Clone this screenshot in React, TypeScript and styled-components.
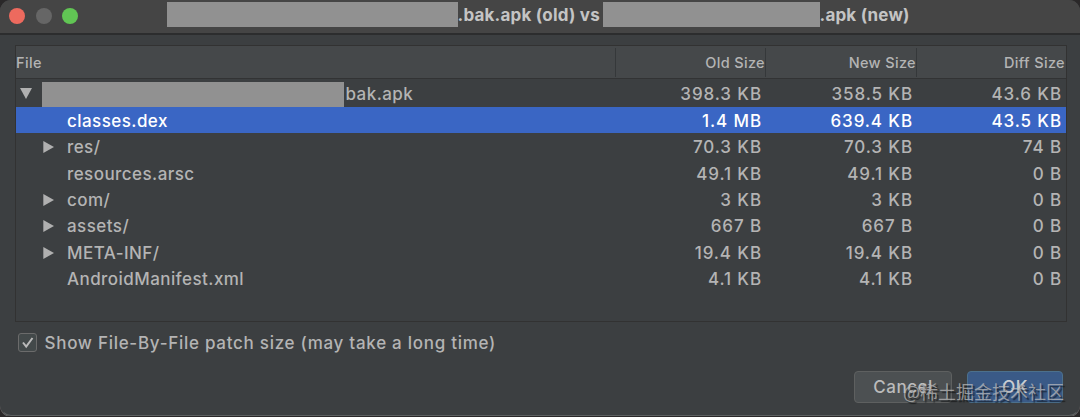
import React from "react";
import styled, { createGlobalStyle } from "styled-components";

const GlobalStyle = createGlobalStyle`
  body {
    margin: 0;
    background: #2a2829;
  }
  * {
    box-sizing: border-box;
  }
`;

const Dialog = styled.div`
  position: relative;
  display: flex;
  flex-direction: column;
  width: 1080px;
  height: 416px;
  overflow: hidden;
  border-radius: 11px;
  background: #3c3f41;
  box-shadow: 0 1px 0 #6b6869;
  color: #b4b4b4;
  font-family: Inter, "Liberation Sans", sans-serif;
  font-size: 17px;
  font-weight: 500;
  letter-spacing: 0.72px;
  white-space: nowrap;

  &::after {
    content: "";
    position: absolute;
    inset: 0;
    border: 1px solid transparent;
    border-bottom-color: #5d6061;
    border-radius: 11px;
    pointer-events: none;
  }
`;

const TitleBar = styled.header`
  display: flex;
  align-items: center;
  height: 35px;
  flex: none;
  padding: 0 0 2px 9px;
  background: #454545;
  border-bottom: 2px solid #2c2d2e;
`;

const Light = styled.span<{ color: string }>`
  width: 16px;
  height: 16px;
  margin-right: 10.5px;
  border-radius: 50%;
  background: ${p => p.color};
`;

const Title = styled.h1`
  display: flex;
  align-items: center;
  margin: 0 0 2px 78px;
  color: #c4c4c4;
  font-size: 17px;
  font-weight: 650;
  letter-spacing: 0.2px;
`;

const Redacted = styled.span<{ width: number }>`
  width: ${p => p.width}px;
  height: 25px;
  flex: none;
  background: #919191;
`;

const TitleText = styled.span<{ width?: number }>`
  width: ${p => (p.width ? `${p.width}px` : "auto")};
  margin-top: 1px;
`;

const Table = styled.section`
  flex: none;
  width: 1052px;
  height: 277px;
  margin: 10px 0 0 15px;
  border: 1px solid #323232;
`;

const Grid = styled.div`
  display: grid;
  grid-template-columns: 600px 150px 151px 149px;
  align-items: center;
`;

const HeadRow = styled(Grid)`
  height: 33px;
  border-bottom: 1px solid #323334;
  background: #45484a;
  font-size: 14.5px;
  letter-spacing: 0.35px;
`;

const HeadCell = styled.div<{ right?: boolean }>`
  height: 29px;
  line-height: 29px;
  text-align: ${p => (p.right ? "right" : "left")};

  &:not(:last-child) {
    border-right: 1px solid #35383a;
  }
  &:last-child {
    padding-right: 1px;
  }
`;

const Body = styled.div`
  padding-top: 1.6px;
`;

const Row = styled(Grid)<{ selected?: boolean }>`
  height: 26.4px;
  padding-top: 1.4px;
  background: ${p => (p.selected ? "#3a66c4" : "transparent")};
  color: ${p => (p.selected ? "#fff" : "inherit")};
`;

const FileCell = styled.div<{ root?: boolean }>`
  display: flex;
  align-items: center;
  height: 25px;
  padding-left: ${p => (p.root ? 4 : 27)}px;
  letter-spacing: 0.44px;
`;

const Arrow = styled.span<{ root?: boolean }>`
  display: flex;
  width: ${p => (p.root ? 22 : 24)}px;
`;

const FileName = styled.span<{ root?: boolean }>`
  margin-left: ${p => (p.root ? 1.5 : 0)}px;
`;

const Size = styled.div`
  padding-right: 4px;
  letter-spacing: 0.9px;
  text-align: right;
`;

const CheckRow = styled.label`
  display: flex;
  align-items: center;
  height: 21px;
  margin: 10px 0 0 18px;
`;

const Box = styled.span`
  display: flex;
  width: 19px;
  height: 19px;
  margin: 0 7.5px 1px 0;
  border: 1px solid #6b6b6b;
  border-radius: 3px;
  background: #43494a;
`;

const Actions = styled.footer`
  display: flex;
  gap: 15px;
  margin: 18px 0 0 854px;
`;

const Button = styled.button<{ primary?: boolean }>`
  width: ${p => (p.primary ? 96 : 98)}px;
  height: 32px;
  padding: 0;
  border: 1px solid ${p => (p.primary ? "#4c708c" : "#5e6060")};
  border-radius: 4px;
  background: ${p => (p.primary ? "#3a5a87" : "#4c5052")};
  color: ${p => (p.primary ? "#c9cdd2" : "#bbb")};
  font: inherit;
  letter-spacing: 0.5px;
`;

const Watermark = styled.div`
  position: absolute;
  top: 379px;
  left: 903px;
  color: rgba(190, 190, 190, 0.72);
  font: 18px/24px "Noto Sans CJK SC", sans-serif;
  letter-spacing: 0;
  text-shadow: 2px 2px 1px rgba(0, 0, 0, 0.5);
`;

const files = [
  { name: "bak.apk", oldSize: "398.3 KB", newSize: "358.5 KB", diff: "43.6 KB", root: true, folder: true },
  { name: "classes.dex", oldSize: "1.4 MB", newSize: "639.4 KB", diff: "43.5 KB", selected: true },
  { name: "res/", oldSize: "70.3 KB", newSize: "70.3 KB", diff: "74 B", folder: true },
  { name: "resources.arsc", oldSize: "49.1 KB", newSize: "49.1 KB", diff: "0 B" },
  { name: "com/", oldSize: "3 KB", newSize: "3 KB", diff: "0 B", folder: true },
  { name: "assets/", oldSize: "667 B", newSize: "667 B", diff: "0 B", folder: true },
  { name: "META-INF/", oldSize: "19.4 KB", newSize: "19.4 KB", diff: "0 B", folder: true },
  { name: "AndroidManifest.xml", oldSize: "4.1 KB", newSize: "4.1 KB", diff: "0 B" }
];

const App = () => (
  <>
    <GlobalStyle />
    <Dialog>
      <TitleBar>
        <Light color="#ed6a5e" />
        <Light color="#666" />
        <Light color="#61c554" />
        <Title>
          <Redacted width={291} />
          <TitleText width={145}>.bak.apk (old) vs</TitleText>
          <Redacted width={217} />
          <TitleText>.apk (new)</TitleText>
        </Title>
      </TitleBar>
      <Table>
        <HeadRow>
          <HeadCell>File</HeadCell>
          <HeadCell right>Old Size</HeadCell>
          <HeadCell right>New Size</HeadCell>
          <HeadCell right>Diff Size</HeadCell>
        </HeadRow>
        <Body>
          {files.map(file => (
            <Row key={file.name} selected={file.selected}>
              <FileCell root={file.root}>
                <Arrow root={file.root}>
                  {file.folder && (
                    <svg width="12" height="12" viewBox="0 0 12 12" fill="#b0b0b0">
                      <path d={file.root ? "M0 0h12L6 11z" : "M.3 0v12L11 6z"} />
                    </svg>
                  )}
                </Arrow>
                {file.root && <Redacted width={302} />}
                <FileName root={file.root}>{file.name}</FileName>
              </FileCell>
              <Size>{file.oldSize}</Size>
              <Size>{file.newSize}</Size>
              <Size>{file.diff}</Size>
            </Row>
          ))}
        </Body>
      </Table>
      <CheckRow>
        <Box>
          <svg width="17" height="17" viewBox="0 0 17 17" fill="none" stroke="#bbb" strokeWidth="2">
            <path d="M4 8.5l3.2 4L13.5 4" />
          </svg>
        </Box>
        Show File-By-File patch size (may take a long time)
      </CheckRow>
      <Actions>
        <Button>Cancel</Button>
        <Button primary>OK</Button>
      </Actions>
      <Watermark>@稀土掘金技术社区</Watermark>
    </Dialog>
  </>
);

export default App;
